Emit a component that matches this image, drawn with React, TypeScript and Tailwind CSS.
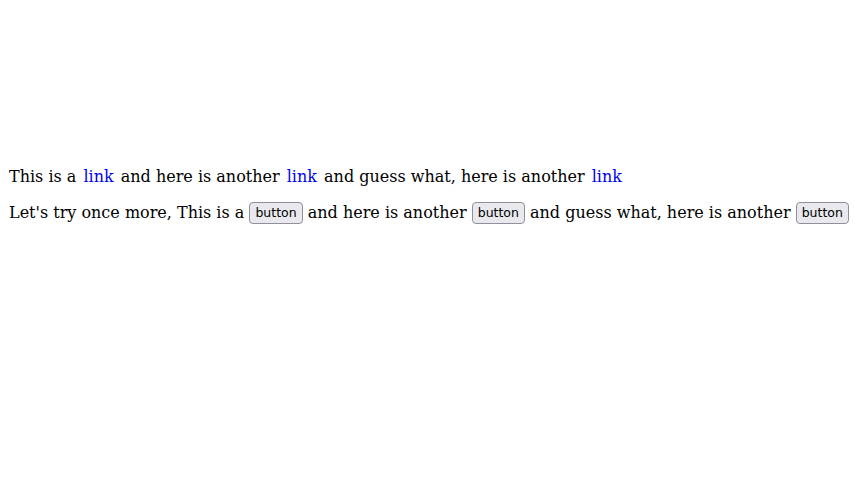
const serif = "font-['DejaVu_Serif',serif]";

function Link() {
  return (
    <a href="#" className="mx-[2px] text-[#0000ee] no-underline">
      link
    </a>
  );
}

function Btn() {
  return (
    <button className="relative top-[-1px] rounded-[4px] border border-[#8f8f9d] bg-[#e9e9ed] px-[5px] py-[2px] align-middle font-['DejaVu_Sans',sans-serif] text-[12.5px] leading-[16px] text-black">
      button
    </button>
  );
}

export default function App() {
  return (
    <div className={`h-[484px] w-[860px] bg-white px-[9px] pt-[166px] text-[16px] leading-[22px] text-black ${serif}`}>
      <p className="whitespace-nowrap">
        This is a <Link /> and here is another <Link /> and guess what, here
        is another <Link />
      </p>
      <p className="mt-[14px] whitespace-nowrap">
        Let's try once more, This is a <Btn /> and here is another <Btn /> and
        guess what, here is another <Btn />
      </p>
    </div>
  );
}
